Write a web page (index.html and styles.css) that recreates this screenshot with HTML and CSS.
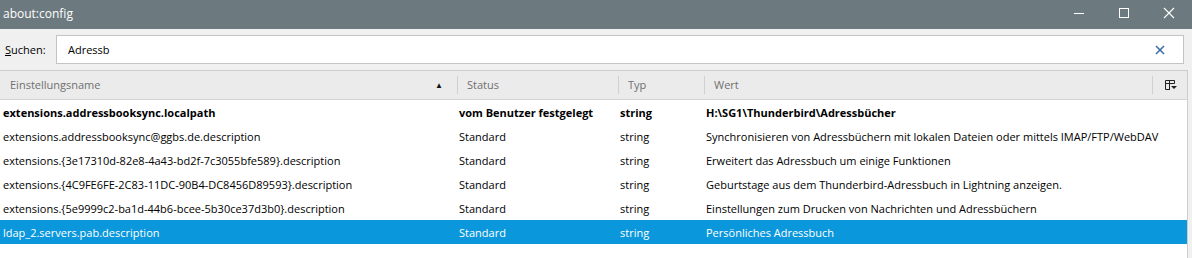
FILE: index.html
```html
<!DOCTYPE html>
<html lang="de">
<head>
    <meta charset="UTF-8">
    <title>about:config</title>
    <link rel="stylesheet" href="styles.css">
</head>
<body>
    <div class="titlebar">
        <span class="title">about:config</span>
        <div class="win-btns">
            <svg class="win-btn" width="12" height="12" viewBox="0 0 12 12"><path d="M1 6.5h10" stroke="#fff" stroke-width="1"/></svg>
            <svg class="win-btn" width="12" height="12" viewBox="0 0 12 12"><rect x="1.5" y="1.5" width="9" height="9" fill="none" stroke="#fff" stroke-width="1"/></svg>
            <svg class="win-btn" width="12" height="12" viewBox="0 0 12 12"><path d="M1 1l10 10M11 1L1 11" stroke="#fff" stroke-width="1.1"/></svg>
        </div>
    </div>

    <div class="search">
        <label class="search-label"><u>S</u>uchen:</label>
        <div class="search-box">
            <span class="search-text">Adressb</span>
            <svg width="10" height="10" viewBox="0 0 10 10"><path d="M1 1l8 8M9 1L1 9" stroke="#3c6ea8" stroke-width="1.6"/></svg>
        </div>
    </div>

    <div class="tree">
        <div class="head">
            <div class="col c-name">Einstellungsname <span class="sort">&#9650;</span></div>
            <div class="col c-status">Status</div>
            <div class="col c-type">Typ</div>
            <div class="col c-value">Wert</div>
            <div class="col c-pick">
                <svg width="13" height="12" viewBox="0 0 13 12"><path d="M1.5 1.5h9v3M1.5 1.5v9h4.5M1.5 4.5h9M5.5 1.5v9" fill="none" stroke="#222" stroke-width="1"/><path d="M7 7h6l-3 3z" fill="#222"/></svg>
            </div>
        </div>
        <div class="row bold">
            <div class="col c-name">extensions.addressbooksync.localpath</div>
            <div class="col c-status">vom Benutzer festgelegt</div>
            <div class="col c-type">string</div>
            <div class="col c-value">H:\SG1\Thunderbird\Adressbücher</div>
        </div>
        <div class="row">
            <div class="col c-name">extensions.addressbooksync@ggbs.de.description</div>
            <div class="col c-status">Standard</div>
            <div class="col c-type">string</div>
            <div class="col c-value">Synchronisieren von Adressbüchern mit lokalen Dateien oder mittels IMAP/FTP/WebDAV</div>
        </div>
        <div class="row">
            <div class="col c-name">extensions.{3e17310d-82e8-4a43-bd2f-7c3055bfe589}.description</div>
            <div class="col c-status">Standard</div>
            <div class="col c-type">string</div>
            <div class="col c-value">Erweitert das Adressbuch um einige Funktionen</div>
        </div>
        <div class="row">
            <div class="col c-name">extensions.{4C9FE6FE-2C83-11DC-90B4-DC8456D89593}.description</div>
            <div class="col c-status">Standard</div>
            <div class="col c-type">string</div>
            <div class="col c-value">Geburtstage aus dem Thunderbird-Adressbuch in Lightning anzeigen.</div>
        </div>
        <div class="row">
            <div class="col c-name">extensions.{5e9999c2-ba1d-44b6-bcee-5b30ce37d3b0}.description</div>
            <div class="col c-status">Standard</div>
            <div class="col c-type">string</div>
            <div class="col c-value">Einstellungen zum Drucken von Nachrichten und Adressbüchern</div>
        </div>
        <div class="row selected">
            <div class="col c-name">ldap_2.servers.pab.description</div>
            <div class="col c-status">Standard</div>
            <div class="col c-type">string</div>
            <div class="col c-value">Persönliches Adressbuch</div>
        </div>
    </div>
</body>
</html>
```

FILE: styles.css
```css
body {
    margin: 0;
    height: 100vh;
    display: flex;
    flex-direction: column;
    font-family: 'Open Sans', 'Noto Sans', sans-serif;
    font-size: 11px;
    background-color: #f0f0f0;
    color: #000;
    overflow: hidden;
}

.titlebar {
    flex: none;
    height: 29px;
    background-color: #6c7a7f;
    color: #fff;
    display: flex;
    align-items: center;
    justify-content: space-between;
    padding-left: 3px;
}

.title {
    font-size: 12px;
    margin-top: -2px;
}

.win-btns {
    display: flex;
    gap: 33px;
    padding-right: 17px;
    margin-top: -4px;
}

.search {
    flex: none;
    display: flex;
    align-items: center;
    padding: 6px 8px 6px 5px;
    gap: 10px;
}

.search-label {
    width: 41px;
}

.search-box {
    flex: 1;
    height: 27px;
    background: #fff;
    border: 1px solid #c4c4c4;
    display: flex;
    align-items: center;
    justify-content: space-between;
    padding: 0 18px 0 11px;
}

.tree {
    flex: 1;
    background: #fff;
    border-top: 1px solid #cdcdcd;
    border-right: 1px solid #cdcdcd;
    margin-right: 4px;
}

.head {
    display: flex;
    height: 28px;
    align-items: center;
    background: #ebebeb;
    border-bottom: 1px solid #d5d5d5;
    color: #707070;
}

.head .col {
    border-right: 1px solid #d0d0d0;
    height: 18px;
    line-height: 18px;
}

.head .c-name {
    padding-left: 10px;
    display: flex;
    justify-content: space-between;
    padding-right: 14px;
}

.head .c-status,
.head .c-type,
.head .c-value {
    padding-left: 9px;
}

.head .c-value {
    flex: none;
    width: 448px;
}

.head .c-pick {
    border-right: none;
    flex: 1;
    display: flex;
    align-items: center;
    justify-content: center;
}

.sort {
    color: #111;
    font-size: 8px;
}

.row {
    display: flex;
    height: 24px;
    align-items: center;
    white-space: nowrap;
}

.row .c-name {
    padding-left: 3px;
}

.row .c-status,
.row .c-type,
.row .c-value {
    padding-left: 1px;
}

.col {
    box-sizing: border-box;
    overflow: hidden;
}

.c-name { width: 458px; }
.c-status { width: 161px; }
.c-type { width: 86px; }
.c-value { flex: 1; }

.bold {
    font-weight: bold;
}

.selected {
    background: #0a97dc;
    color: #fff;
}
```
